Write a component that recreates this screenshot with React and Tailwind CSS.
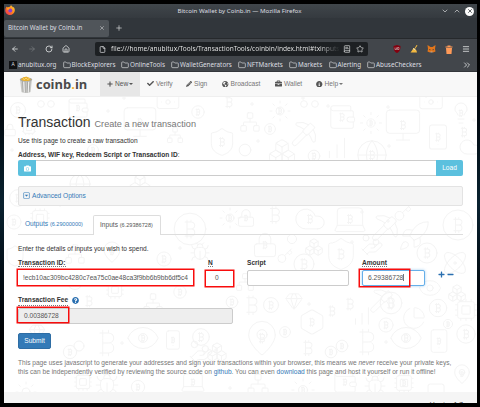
import React from 'react';
import {
  Bitcoin, Eye, Rocket, Pickaxe, Cloud, Wallet, Monitor, Shield, Lock, Lightbulb, MapPin, Atom, Boxes, Globe, Gem, Cpu,
  Smartphone, Key, Sun, Hexagon, ChartPie, Banknote, HandCoins, Circle, Network, Laptop, Bug, ChartNoAxesColumnIncreasing,
  ArrowLeft, ArrowRight, RotateCw, House, File, Folder, Star, Menu, ChevronDown, ChevronUp, ChevronsRight, X, Plus, BookText,
} from 'lucide-react';
import { FaPlus, FaMinus, FaCheck, FaPencilAlt, FaGlobeAmericas, FaBriefcase, FaInfoCircle, FaCamera, FaQuestionCircle, FaRegCaretSquareDown } from 'react-icons/fa';

// icon, centre x, centre y, size, optional coin mark size
const doodles = [
  [Wallet, 78, 108, 24, 8], [Circle, 41, 104, 8], [Circle, 51, 104, 8], [Circle, 18, 110, 18, 10], [Cpu, 29, 128, 16],
  [Circle, 198, 112, 15, 9], [Monitor, 140, 122, 38, 10], [Shield, 222, 142, 32, 12], [Bitcoin, 229, 102, 15], [Banknote, 168, 102, 26],
  [Sun, 280, 111, 24, 8], [Circle, 304, 104, 8], [Circle, 315, 104, 8], [Wallet, 342, 117, 30, 11], [Sun, 371, 123, 25, 7],
  [Monitor, 403, 125, 40, 12], [Smartphone, 438, 137, 29, 11], [Lightbulb, 461, 113, 24, 9], [Banknote, 431, 102, 27],
  [Bitcoin, 464, 132, 13], [Circle, 270, 129, 13, 8], [Pickaxe, 304, 134, 28], [Network, 250, 122, 22], [Circle, 314, 156, 14, 9],
  [Boxes, 282, 152, 30], [ChartNoAxesColumnIncreasing, 337, 148, 26], [Globe, 372, 155, 34, 12], [Cloud, 470, 147, 24],
  [Network, 175, 135, 18], [Circle, 93, 150, 13, 8], [Lock, 10, 130, 14], [Circle, 245, 150, 14],
  [Circle, 18, 198, 20, 11], [Globe, 80, 184, 24], [Boxes, 140, 184, 24], [Cpu, 40, 218, 22], [Circle, 14, 222, 17, 9],
  [Circle, 190, 229, 38, 24], [Sun, 230, 218, 24, 8], [Circle, 164, 259, 17, 10], [MapPin, 112, 252, 24, 8], [Shield, 15, 256, 24],
  [Network, 75, 254, 22], [Bug, 200, 252, 22], [Lock, 246, 218, 20, 8], [Bitcoin, 275, 215, 22], [Cloud, 310, 219, 34, 12],
  [Laptop, 350, 219, 38, 12], [Pickaxe, 385, 228, 30], [Key, 403, 213, 19], [Rocket, 414, 236, 34], [Circle, 458, 225, 36, 20],
  [Lock, 265, 245, 28, 10], [Circle, 292, 239, 11], [Shield, 341, 254, 37, 15], [HandCoins, 372, 245, 24], [Circle, 304, 264, 24, 15],
  [Circle, 427, 253, 24, 14], [Boxes, 314, 247, 20], [Atom, 455, 263, 28], [Key, 285, 256, 17], [Network, 245, 282, 20],
  [Eye, 430, 288, 25], [Circle, 75, 282, 18, 10], [Cpu, 115, 290, 20], [Circle, 180, 292, 15, 9],
  [Bitcoin, 107, 343, 34], [Eye, 143, 338, 36, 9], [Circle, 201, 337, 20, 12], [Smartphone, 173, 340, 22, 8], [Circle, 70, 352, 16, 9],
  [Circle, 79, 346, 12], [Circle, 232, 302, 14, 9], [Bug, 107, 384, 26], [Circle, 138, 387, 16, 9], [Cpu, 83, 382, 20],
  [Bitcoin, 89, 301, 15], [Network, 153, 303, 22], [Sun, 26, 392, 24], [Laptop, 193, 382, 28, 9], [Gem, 37, 332, 18],
  [Bitcoin, 252, 305, 25], [Circle, 271, 305, 18, 11], [Gem, 294, 301, 19], [Bitcoin, 350, 304, 16], [Bitcoin, 332, 311, 14],
  [Circle, 391, 303, 26, 16], [Pickaxe, 382, 301, 27], [Circle, 438, 308, 21, 12], [Cpu, 466, 310, 25], [Hexagon, 312, 322, 29, 11],
  [ChartPie, 414, 318, 25], [MapPin, 262, 338, 40, 13], [Circle, 285, 332, 13, 8], [Circle, 386, 325, 17, 10], [Bitcoin, 367, 342, 34],
  [Eye, 406, 338, 36, 10], [Circle, 331, 352, 14, 8], [Circle, 342, 346, 14, 8], [Smartphone, 439, 341, 27, 9], [Circle, 466, 334, 22, 13],
  [MapPin, 462, 374, 22, 7], [ChartNoAxesColumnIncreasing, 362, 316, 22], [Wallet, 345, 382, 27, 9], [Bitcoin, 308, 348, 20],
  [Network, 258, 384, 24], [Sun, 303, 390, 27, 8], [Bug, 375, 385, 24], [Cpu, 404, 383, 22, 8], [Laptop, 436, 391, 24], [Boxes, 217, 352, 22],
  [Boxes, 457, 293, 20], [Circle, 448, 324, 11, 7], [HandCoins, 201, 352, 26],
];
const sparks = [[124, 98], [108, 111], [252, 104], [328, 106], [388, 107], [258, 141], [389, 146], [362, 212], [388, 221], [180, 248], [309, 304], [386, 342], [122, 343], [216, 350], [303, 98], [474, 120], [60, 205], [352, 242], [55, 372], [230, 388], [426, 96], [12, 150]];

function Mark({ icon: Icon, x, y, s }) {
  return (
    <g transform={Icon === Bitcoin ? `rotate(-10 ${x} ${y})` : undefined}>
      <Icon x={x - s / 2} y={y - s / 2} width={s} height={s} strokeWidth={24 / s} />
    </g>
  );
}

function Doodles() {
  return (
    <svg className="absolute inset-0 text-[#f4f4f4]" width="474" height="332" viewBox="4 72 474 332" aria-hidden="true">
      {doodles.map(([icon, x, y, s, c], i) => (
        <g key={i}>
          <Mark icon={icon} x={x} y={y} s={s} />
          {c ? <Mark icon={Bitcoin} x={x} y={y} s={c} /> : null}
        </g>
      ))}
      {sparks.map(([x, y], i) => <path key={i} d={`M${x - 2} ${y}h4M${x} ${y - 2}v4`} stroke="currentColor" />)}
    </svg>
  );
}

function FirefoxLogo() {
  return (
    <svg width="10" height="10" viewBox="0 0 20 20" className="-mt-[2px]">
      <defs>
        <linearGradient id="ff" x1="1" y1="0" x2="0" y2="1">
          <stop offset="0" stopColor="#ffe040" /><stop offset=".45" stopColor="#ff8a1c" /><stop offset="1" stopColor="#f0245c" />
        </linearGradient>
      </defs>
      <path fill="url(#ff)" d="M12 0c1 2 3 3 4 5l1-1c2 2 3 5 2.500 8-.8 4.500-4.500 8-9.500 8S.5 16.500.5 11C.5 8 1.500 5 3.500 3l.5 2c1-.7 2-1 3.500-1C9 4 11 3 12 0z" />
      <circle cx="10.500" cy="11" r="4" fill="#8a3fd0" />
      <path fill="#ffa51f" d="M4 6c2-1 5 0 6 2-2 0-3 1-3.500 2.500C5 10 4 8 4 6z" />
    </svg>
  );
}

function CanLogo() {
  return (
    <svg width="14" height="17" viewBox="0 0 28 34">
      <path d="M2 7h24l-3 25c-4 2.500-14 2.500-18 0z" fill="#c9c9c6" />
      <path d="M7 10l1.500 22M12 11l.5 22M17 11l-.5 22M22 10l-2 22" stroke="#9c9c99" strokeWidth="1.500" />
      <path d="M9.500 11l1 22M19.500 11l-1 22" stroke="#f4f4f4" strokeWidth="2" />
      <ellipse cx="14" cy="7" rx="12.500" ry="4" fill="#a8a8a4" />
      <path d="M4 7c1-3 3-2 4-4 2-2 4 0 6-2 2 0 3 2 5 2s3 3 5 4c-4 4-16 4-20 0z" fill="#e9b02e" />
      <path d="M8 5l3 2 3-3 3 3 4-2" stroke="#fbe08a" strokeWidth="1.500" fill="none" />
    </svg>
  );
}

const bookmarks = [
  ['BlockExplorers', 'w-[58.500px]'], ['OnlineTools', 'w-[50px]'], ['WalletGenerators', 'w-[67px]'],
  ['NFTMarkets', 'w-[51px]'], ['Markets', 'w-[39.500px]'], ['Alerting', 'w-[38.500px]'], ['AbuseCheckers', 'w-[60px]'],
];

function Chrome() {
  return (
    <div className="h-[68px] shrink-0 font-['Noto_Sans',sans-serif] text-[6.200px] text-[#dcdee0]">
      <div className="flex h-[14px] items-center bg-linear-to-b from-[#40464b] to-[#353a3f] pr-[3px] pl-[1px]">
        <FirefoxLogo />
        <span className="flex-1 pl-[23px] text-center text-[6.150px] whitespace-nowrap">Bitcoin Wallet by Coinb.in — Mozilla Firefox</span>
        <div className="flex items-center gap-[4px]">
          <ChevronDown size={8} /><ChevronUp size={8} />
          <span className="flex size-[9px] items-center justify-center rounded-full bg-[#fcfcfc] text-[#30353a]"><X size={6} strokeWidth={3} /></span>
        </div>
      </div>
      <div className="flex h-[20px] items-center bg-[#31363b]">
        <div className="flex h-[17px] w-[105px] items-center justify-between rounded-[2px] bg-[#50555a] pr-[4px] pl-[4px]">
          <span className="text-[6.250px] whitespace-nowrap">Bitcoin Wallet by Coinb.in</span>
          <X size={6} />
        </div>
        <Plus size={8} className="ml-[6px]" />
      </div>
      <div className="flex h-[21px] items-center border-t border-[#26292c] bg-[#42464b]">
        <div className="flex w-[91px] items-center gap-[9px] pl-[7px]">
          <ArrowLeft size={8} strokeWidth={2.5} /><ArrowRight size={8} className="text-[#7c8084]" /><RotateCw size={8} strokeWidth={2.5} /><House size={8} strokeWidth={2.5} />
        </div>
        <div className="flex h-[14px] w-[273px] items-center rounded-[2px] bg-[#1d2023] pl-[4px]">
          <File size={7} strokeWidth={2.5} />
          <span className="ml-[5px] w-[229px] shrink-0 overflow-hidden bg-linear-to-r from-[#f0f0f0] from-91% to-[#1d2023] bg-clip-text text-[6.570px] whitespace-nowrap text-transparent">file:///home/anubitux/Tools/TransactionTools/coinbin/index.html#txinputs</span>
          <BookText size={8} className="ml-[3px] shrink-0" />
          <Star size={8} className="ml-[5px] shrink-0" />
        </div>
        <div className="ml-[25px] flex items-center gap-[9px]">
          <svg width="8" height="8" viewBox="0 0 16 16"><path d="M8 0c2 1 4 1.500 7 2 0 7-1 11-7 14C2 13 1 9 1 2c3-.5 5-1 7-2z" fill="#84000f" /><path d="M4 5v4h3V5M9 5h3v4H9z" stroke="#ddd" fill="none" /></svg>
          <svg width="8" height="8" viewBox="0 0 16 16"><path d="M13 0l2 1-5 7 3 3 1 4H1l3-4 3-5 2 1z" fill="#f3b83f" /><path d="M6 7l5 3" stroke="#e8e2c0" strokeWidth="2" /></svg>
          <svg width="9" height="8" viewBox="0 0 18 16"><path d="M1 0l6 4h4l6-4-1 8 1 5-5 2-2-1H8l-2 1-5-2 1-5z" fill="#e2761b" /><path d="M4 8l3 1-1 2zM14 8l-3 1 1 2z" fill="#233447" /><path d="M7 13h4v2H7z" fill="#c0ad9e" /></svg>
          <svg width="8" height="9" viewBox="0 0 16 18"><path d="M1 3h14v2H1zM5 1h6v2H5zM2 6h12l-1 12H3z" fill="#ff9a58" /></svg>
          <Menu size={8} strokeWidth={2.5} />
        </div>
      </div>
      <div className="flex h-[13px] items-center border-b border-[#34373b] bg-[#42464b] pl-[5px] text-[6.330px]">
        <span className="flex size-[8px] items-center justify-center bg-[#101113] text-[5px]">A</span>
        <span className="ml-[1px] w-[44.500px] whitespace-nowrap">anubitux.org</span>
        {bookmarks.map(([name, w]) => (
          <span key={name} className={`flex shrink-0 items-center gap-[1px] whitespace-nowrap ${w}`}><Folder size={8} className="shrink-0" />{name}</span>
        ))}
        <ChevronsRight size={10} className="mr-[5px] ml-auto" />
      </div>
    </div>
  );
}

const Caret = () => <span className="-ml-[1px] inline-block border-x-[2px] border-t-[2px] border-x-transparent border-t-current" />;

function Nav() {
  return (
    <nav className="relative flex h-[25px] items-center border-b border-[#efefef] bg-[#f8f8f8] pl-[15px] text-[6.650px] text-[#777]">
      <CanLogo />
      <span className="ml-[3px] w-[64px] font-['Open_Sans',sans-serif] text-[12.900px] leading-none font-bold text-[#4a4a4a]">coinb<span className="text-[#f0ad2e]">.</span>in</span>
      <span className="flex h-full w-[40px] items-center gap-[2px] bg-[#e7e7e7] pl-[7px] text-[#555]"><FaPlus size={6} />New<Caret /></span>
      <span className="flex w-[39px] items-center gap-[2px] pl-[7px]"><FaCheck size={7} className="text-[#555]" />Verify</span>
      <span className="flex w-[36px] items-center gap-[2px] pl-[7px]"><FaPencilAlt size={6} className="text-[#555]" />Sign</span>
      <span className="flex w-[53px] items-center gap-[2px] pl-[7px]"><FaGlobeAmericas size={6.5} className="text-[#555]" />Broadcast</span>
      <span className="flex w-[41px] items-center gap-[2px] pl-[7px]"><FaBriefcase size={7} className="text-[#555]" />Wallet</span>
      <span className="flex items-center gap-[2px] pl-[7px]"><FaInfoCircle size={6.5} className="text-[#555]" />Help<Caret /></span>
    </nav>
  );
}

export default function App() {
  return (
    <div className="h-[407px] w-[480px] overflow-hidden bg-linear-to-b from-black via-[#0a2230] to-black py-[4px] pr-[3px] pl-[4px]">
      <div className="flex h-[399px] w-[473px] flex-col overflow-hidden bg-white">
        <Chrome />
        <main className="relative h-[332px] w-[474px] font-['Liberation_Sans',Arial,sans-serif] text-[6.580px] leading-[9.360px] text-[#333]">
          <Doodles />
          <Nav />
          <div className="relative h-[295px] pr-[15px] pl-[14px]">
            <h1 className="h-[39px] pt-[17px] text-[14px] leading-[17px]">Transaction <small className="text-[9.130px] text-[#777]">Create a new transaction</small></h1>
            <p className="h-[14px]">Use this page to create a raw transaction</p>
            <p className="h-[10px]"><b>Address, WIF key, Redeem Script or Transaction ID</b>:</p>
            <div className="flex h-[16px]">
              <span className="flex w-[18px] items-center justify-center rounded-l-[2px] bg-[#5bc0de] text-white"><FaCamera size={7} /></span>
              <span className="flex-1 border-y border-[#ccc] bg-white" />
              <span className="flex w-[27px] items-center justify-center rounded-r-[2px] bg-[#5bc0de] text-white">Load</span>
            </div>
            <div className="mt-[10px] flex h-[20px] items-center gap-[2px] rounded-[2px] border border-[#e3e3e3] bg-[#f5f5f5] pb-[1px] pl-[4px] text-[#337ab7]"><FaRegCaretSquareDown size={7} />Advanced Options</div>
            <div className="mt-[9px] flex h-[20px] items-center border-b border-[#ddd]">
              <span className="w-[75px] pl-[7px] text-[#337ab7]">Outputs <small className="text-[5.570px]">(6.29000000)</small></span>
              <span className="-mb-px h-[20px] w-[68px] rounded-t-[2px] border border-b-0 border-[#ddd] bg-white pt-[4px] pl-[6px] text-[#555]">Inputs <small className="text-[5.570px]">(6.29386728)</small></span>
            </div>
            <p className="mt-[9px] h-[14px]">Enter the details of inputs you wish to spend.</p>
            <div className="flex h-[11px] font-bold">
              <span className="w-[190px]"><span className="border-b border-dotted border-[#777]">Transaction ID:</span></span>
              <span className="w-[39px]"><span className="border-b border-dotted border-[#777]">N</span></span>
              <span className="w-[115px]">Script</span>
              <span><span className="border-b border-dotted border-[#777]">Amount</span></span>
            </div>
            <div className="flex h-[18px] items-start text-[#555]">
              <span className="-ml-[1px] flex h-[17px] w-[177px] items-center overflow-hidden border border-[#f80c0c] bg-white pl-[5px] text-[6.640px] whitespace-nowrap shadow-[0_0_0_0.5px_#f80c0c]">!ecb10ac309bc4280c7ea75c0ae48ca3f9bb6b9bb6df5c4</span>
              <span className="ml-[11px] mt-[1px] flex h-[17px] w-[29px] items-center border border-[#f80c0c] bg-white pb-[2px] pl-[9px] shadow-[0_0_0_0.5px_#f80c0c]">0</span>
              <span className="mt-[1px] ml-[13px] h-[16px] w-[102px] rounded-[2px] border border-[#ccc] bg-white" />
              <span className="relative mt-[1px] ml-[13px] flex h-[16px] w-[63px] items-center rounded-[2px] border border-[#66afe9] bg-white pb-[1px] pl-[5px] text-[6.700px] shadow-[0_0_3px_#66afe999]">
                6.29386728<span className="h-[7px] w-px bg-[#777]" />
                <span className="absolute -top-[2px] -left-[4px] h-[18px] w-[51px] border border-[#f80c0c] shadow-[0_0_0_0.5px_#f80c0c]" />
              </span>
              <span className="mt-[2px] ml-[13px] flex gap-[2px] text-[#2a6fb0]"><FaPlus size={7} /><FaMinus size={7} /></span>
            </div>
            <div className="mt-[9px] flex h-[12px] items-start gap-[4px]">
              <b className="h-[10px] border-b border-dotted border-[#777] leading-[8.500px]">Transaction Fee</b><FaQuestionCircle size={7} className="mt-[1px] text-[#2a6fb0]" />
            </div>
            <div className="relative flex h-[16px] w-[215px] items-center rounded-[2px] border border-[#ccc] bg-[#eee] pb-[1px] pl-[5px] text-[#555]">
              0.00386728
              <span className="absolute -top-[2px] -left-[2px] h-[16px] w-[52px] border border-[#f80c0c] shadow-[0_0_0_0.5px_#f80c0c]" />
            </div>
            <button className="mt-[9px] flex h-[16px] w-[33px] items-center justify-center rounded-[2px] border border-[#2e6da4] bg-[#337ab7] pb-[1px] text-white">Submit</button>
            <p className="mt-[9px] text-[6.590px] whitespace-nowrap text-[#777]">
              This page uses javascript to generate your addresses and sign your transactions within your browser, this means we <i>never</i> receive your private keys,<br />
              this can be independently verified by reviewing the source code on <span className="text-[#337ab7]">github</span>. You can even <span className="text-[#337ab7]">download</span> this page and host it yourself or run it offline!
            </p>
          </div>
          <footer className="relative h-[12px] overflow-hidden bg-[#f5f5f5] pt-[8px] pr-[15px] text-right text-[#333]">Version 1.7</footer>
        </main>
      </div>
    </div>
  );
}
